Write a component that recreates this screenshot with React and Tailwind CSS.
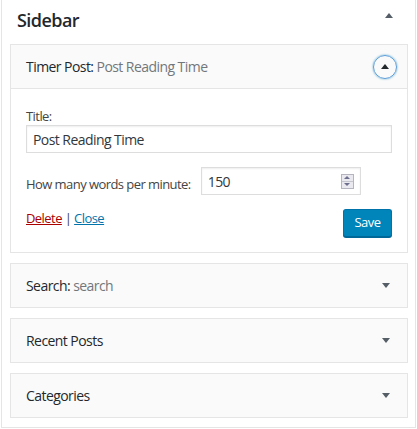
export default function App() {
  const Down = () => (
    <div className="h-0 w-0 border-x-[4px] border-t-[5px] border-x-transparent border-t-[#555d66]" />
  );
  const Card = ({ title, sub }) => (
    <div className="mt-[10px] flex h-[45px] items-center justify-between border border-[#e5e5e5] bg-[#fafafa] pl-[15px] pr-[17px]">
      <div className="text-[14px] font-medium leading-[19px] text-[#23282d]">
        {title}
        {sub && <span className="font-normal text-[#72777c]">{sub}</span>}
      </div>
      <Down />
    </div>
  );
  return (
    <div className="min-h-[429px] w-[417px] bg-white pl-[1px] font-['Open_Sans',sans-serif] tracking-[-0.035em] text-[#23282d]">
      <div className="w-[415px] border-x border-b border-[#e5e5e5] pb-[9px] pl-[8px] pr-[7px]">
        <div className="flex h-[44px] items-start justify-between pl-[7px] pr-[15px]">
          <div className="pt-[6px] text-[18px] font-semibold leading-[28px]">Sidebar</div>
          <div className="mt-[13px] h-0 w-0 border-x-[4px] border-b-[5px] border-x-transparent border-b-[#555d66]" />
        </div>
        <div className="border border-[#e5e5e5]">
          <div className="flex h-[43px] items-center justify-between bg-[#fafafa] pl-[15px] pr-[10px]">
            <div className="text-[14px] font-medium leading-[19px] text-[#23282d]">
              Timer Post: <span className="font-normal text-[#72777c]">Post Reading Time</span>
            </div>
            <div className="flex h-[24px] w-[24px] items-center justify-center rounded-full border border-[#5b9dd9] shadow-[0_0_2px_rgba(30,140,190,0.8)]">
              <div className="mb-[1px] h-0 w-0 border-x-[4px] border-b-[5px] border-x-transparent border-b-[#23282d]" />
            </div>
          </div>
          <div className="border-t border-[#e5e5e5] bg-white px-[15px] pb-[15px] pt-[18px] text-[13px] text-[#444]">
            <div className="leading-[18px]">Title:</div>
            <div className="flex h-[28px] items-center border border-[#ddd] px-[6px] text-[14px] text-[#32373c] shadow-[inset_0_1px_2px_rgba(0,0,0,0.07)]">
              Post Reading Time
            </div>
            <div className="mt-[14px] flex items-center">
              <div className="pt-[5px] leading-[18px]">How many words per minute:</div>
              <div className="ml-[10px] flex h-[28px] w-[160px] items-center justify-between border border-[#ddd] pl-[6px] pr-[6px] text-[14px] text-[#32373c] shadow-[inset_0_1px_2px_rgba(0,0,0,0.07)]">
                <span>150</span>
                <div className="flex h-[15px] w-[13px] flex-col border border-[#b5b5c0] bg-[#e9e9ef]">
                  <div className="flex flex-1 items-center justify-center border-b border-[#c5c5cf]">
                    <div className="h-0 w-0 border-x-[3px] border-b-[3px] border-x-transparent border-b-[#6e6e8e]" />
                  </div>
                  <div className="flex flex-1 items-center justify-center">
                    <div className="h-0 w-0 border-x-[3px] border-t-[3px] border-x-transparent border-t-[#6e6e8e]" />
                  </div>
                </div>
              </div>
            </div>
            <div className="mt-[14px] flex items-start justify-between">
              <div className="leading-[18px]">
                <span className="text-[#a00] underline">Delete</span>
                <span className="text-[#444]"> | </span>
                <span className="text-[#0073aa] underline">Close</span>
              </div>
              <div className="flex h-[28px] w-[49px] items-center justify-center rounded-[3px] border border-[#0073aa] border-b-[#006799] bg-[#0085ba] text-[13px] text-white shadow-[0_1px_0_#006799]">
                Save
              </div>
            </div>
          </div>
        </div>
        <Card title="Search: " sub="search" />
        <Card title="Recent Posts" />
        <Card title="Categories" />
      </div>
    </div>
  );
}
